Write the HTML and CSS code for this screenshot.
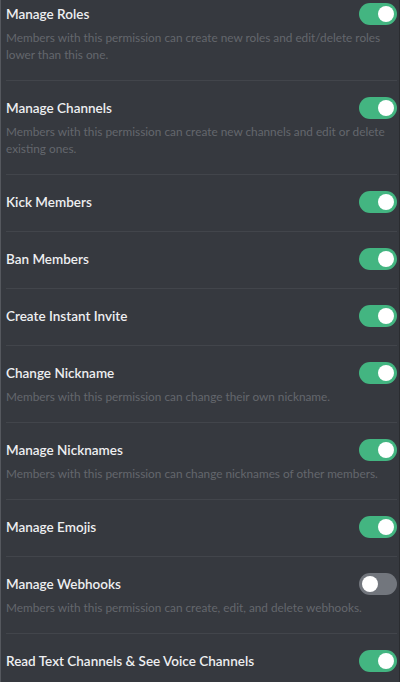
FILE: index.html
```html
<!DOCTYPE html>
<html>
<head>
<meta charset="utf-8">
<link rel="stylesheet" href="styles.css">
</head>
<body>
<div class="frame">
  <ul class="perms">
    <li class="perm">
      <div class="head"><span class="title">Manage Roles</span><span class="switch on"><span class="knob"></span></span></div>
      <p class="desc">Members with this permission can create new roles and edit/delete roles lower than this one.</p>
    </li>
    <li class="perm">
      <div class="head"><span class="title">Manage Channels</span><span class="switch on"><span class="knob"></span></span></div>
      <p class="desc">Members with this permission can create new channels and edit or delete existing ones.</p>
    </li>
    <li class="perm">
      <div class="head"><span class="title">Kick Members</span><span class="switch on"><span class="knob"></span></span></div>
    </li>
    <li class="perm">
      <div class="head"><span class="title">Ban Members</span><span class="switch on"><span class="knob"></span></span></div>
    </li>
    <li class="perm">
      <div class="head"><span class="title">Create Instant Invite</span><span class="switch on"><span class="knob"></span></span></div>
    </li>
    <li class="perm">
      <div class="head"><span class="title">Change Nickname</span><span class="switch on"><span class="knob"></span></span></div>
      <p class="desc">Members with this permission can change their own nickname.</p>
    </li>
    <li class="perm">
      <div class="head"><span class="title">Manage Nicknames</span><span class="switch on"><span class="knob"></span></span></div>
      <p class="desc">Members with this permission can change nicknames of other members.</p>
    </li>
    <li class="perm">
      <div class="head"><span class="title">Manage Emojis</span><span class="switch on"><span class="knob"></span></span></div>
    </li>
    <li class="perm">
      <div class="head"><span class="title">Manage Webhooks</span><span class="switch off"><span class="knob"></span></span></div>
      <p class="desc">Members with this permission can create, edit, and delete webhooks.</p>
    </li>
    <li class="perm">
      <div class="head"><span class="title">Read Text Channels &amp; See Voice Channels</span><span class="switch on"><span class="knob"></span></span></div>
    </li>
  </ul>
</div>
</body>
</html>
```

FILE: styles.css
```css
html, body {
  margin: 0;
  padding: 0;
  background: #36393f;
}
body {
  width: 400px;
  height: 682px;
  overflow: hidden;
  font-family: Lato, "Open Sans", sans-serif;
}
.frame {
  box-sizing: border-box;
  height: 682px;
  overflow: hidden;
  border-left: 1px solid #55585e;
  border-right: 1px solid #2a2c30;
  padding: 0 2px 0 5px;
}
.perms {
  list-style: none;
  margin: -14px 0 0 0;
  padding: 0;
}
.perm {
  border-top: 1px solid #42454b;
  padding: 15px 0 17px;
}
.head {
  display: flex;
  align-items: center;
  justify-content: space-between;
  height: 24px;
}
.title {
  color: #eeeff1;
  font-size: 13.5px;
  font-weight: 600;
}
.desc {
  margin: 3px 0 0;
  color: #64676d;
  font-size: 11.8px;
  line-height: 17px;
}
.switch {
  box-sizing: border-box;
  width: 38px;
  height: 22px;
  border-radius: 11px;
  padding: 3px;
  display: flex;
  flex: none;
}
.switch.on {
  background: #43b581;
  justify-content: flex-end;
}
.switch.off {
  background: #72767d;
  justify-content: flex-start;
}
.knob {
  width: 16px;
  height: 16px;
  border-radius: 50%;
  background: #ffffff;
}
```
